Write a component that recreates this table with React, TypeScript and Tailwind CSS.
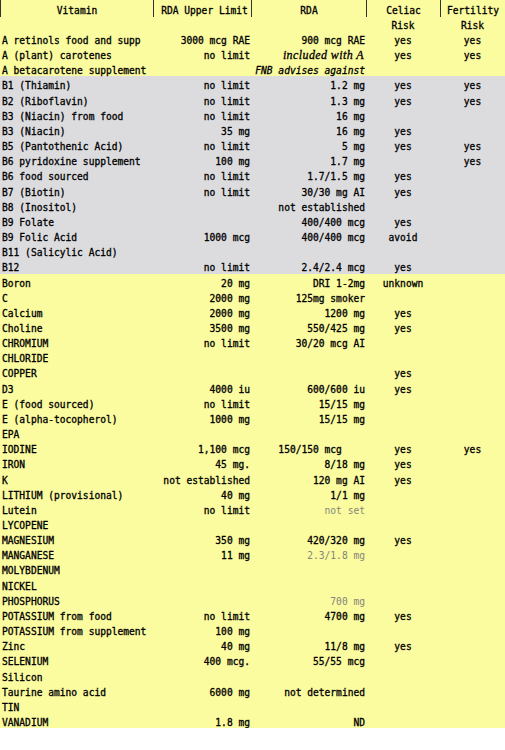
import React from "react";

type Kind = "n" | "gray" | "iserif" | "imono";
type Row = { n: string; u?: string; r?: string; rk?: Kind; c?: string; f?: string; g?: boolean };

const rows: Row[] = [
  { n: "A retinols food and supp", u: "3000 mcg RAE", r: "900 mcg RAE", c: "yes", f: "yes" },
  { n: "A (plant) carotenes", u: "no limit", r: "included with A", rk: "iserif", c: "yes", f: "yes" },
  { n: "A betacarotene supplement", r: "FNB advises against", rk: "imono" },
  { n: "B1 (Thiamin)", u: "no limit", r: "1.2 mg", c: "yes", f: "yes", g: true },
  { n: "B2 (Riboflavin)", u: "no limit", r: "1.3 mg", c: "yes", f: "yes", g: true },
  { n: "B3 (Niacin) from food", u: "no limit", r: "16 mg", g: true },
  { n: "B3 (Niacin)", u: "35 mg", r: "16 mg", c: "yes", g: true },
  { n: "B5 (Pantothenic Acid)", u: "no limit", r: "5 mg", c: "yes", f: "yes", g: true },
  { n: "B6 pyridoxine supplement", u: "100 mg", r: "1.7 mg", f: "yes", g: true },
  { n: "B6 food sourced", u: "no limit", r: "1.7/1.5 mg", c: "yes", g: true },
  { n: "B7 (Biotin)", u: "no limit", r: "30/30 mg AI", c: "yes", g: true },
  { n: "B8 (Inositol)", r: "not established", g: true },
  { n: "B9 Folate", r: "400/400 mcg", c: "yes", g: true },
  { n: "B9 Folic Acid", u: "1000 mcg", r: "400/400 mcg", c: "avoid", g: true },
  { n: "B11 (Salicylic Acid)", g: true },
  { n: "B12", u: "no limit", r: "2.4/2.4 mcg", c: "yes", g: true },
  { n: "Boron", u: "20 mg", r: "DRI 1-2mg", c: "unknown" },
  { n: "C", u: "2000 mg", r: "125mg smoker" },
  { n: "Calcium", u: "2000 mg", r: "1200 mg", c: "yes" },
  { n: "Choline", u: "3500 mg", r: "550/425 mg", c: "yes" },
  { n: "CHROMIUM", u: "no limit", r: "30/20 mcg AI" },
  { n: "CHLORIDE" },
  { n: "COPPER", c: "yes" },
  { n: "D3", u: "4000 iu", r: "600/600 iu", c: "yes" },
  { n: "E (food sourced)", u: "no limit", r: "15/15 mg" },
  { n: "E (alpha-tocopherol)", u: "1000 mg", r: "15/15 mg" },
  { n: "EPA" },
  { n: "IODINE", u: "1,100 mcg", r: "150/150 mcg    ", c: "yes", f: "yes" },
  { n: "IRON", u: "45 mg.", r: "8/18 mg", c: "yes" },
  { n: "K", u: "not established", r: "120 mg AI", c: "yes" },
  { n: "LITHIUM (provisional)", u: "40 mg", r: "1/1 mg" },
  { n: "Lutein", u: "no limit", r: "not set", rk: "gray" },
  { n: "LYCOPENE" },
  { n: "MAGNESIUM", u: "350 mg", r: "420/320 mg", c: "yes" },
  { n: "MANGANESE", u: "11 mg", r: "2.3/1.8 mg", rk: "gray" },
  { n: "MOLYBDENUM" },
  { n: "NICKEL" },
  { n: "PHOSPHORUS", r: "700 mg", rk: "gray" },
  { n: "POTASSIUM from food", u: "no limit", r: "4700 mg", c: "yes" },
  { n: "POTASSIUM from supplement", u: "100 mg" },
  { n: "Zinc", u: "40 mg", r: "11/8 mg", c: "yes" },
  { n: "SELENIUM", u: "400 mcg.", r: "55/55 mcg" },
  { n: "Silicon" },
  { n: "Taurine amino acid", u: "6000 mg", r: "not determined" },
  { n: "TIN" },
  { n: "VANADIUM", u: "1.8 mg", r: "ND" },
];

function RdaCell({ r, k }: { r?: string; k?: Kind }) {
  if (!r) return <div />;
  if (k === "iserif")
    return (
      <div className="text-right pr-[2px] italic text-[12px] tracking-[0.4px]" style={{ fontFamily: '"Liberation Serif", serif' }}>
        {r}
      </div>
    );
  if (k === "imono") return <div className="text-right pr-[1px] italic whitespace-pre">{r}</div>;
  if (k === "gray") return <div className="text-right pr-[1px] text-[#85857a] whitespace-pre [-webkit-text-stroke:0px]">{r}</div>;
  return <div className="text-right pr-[1px] whitespace-pre">{r}</div>;
}

export default function App() {
  return (
    <div
      className="w-[505px] text-[9.6px] text-black [-webkit-text-stroke:0.3px_black]"
      style={{ fontFamily: '"DejaVu Sans Mono", monospace' }}
    >
      <div className="bg-[#fbfb9f] h-[31px]">
        <div className="grid grid-cols-[153px_98px_115px_74px_65px] h-[16px] leading-[13px]">
          <div className="border-l border-[#333] text-center pt-[4px]">Vitamin</div>
          <div className="border-l border-[#333] text-center pt-[4px] pl-[4px]">RDA Upper Limit</div>
          <div className="border-l border-[#333] text-center pt-[4px]">RDA</div>
          <div className="border-l border-[#333] text-center pt-[4px]">Celiac</div>
          <div className="border-l border-[#333] text-center pt-[4px]">Fertility</div>
        </div>
        <div className="grid grid-cols-[153px_98px_115px_74px_65px] leading-[13px] pt-[3px]">
          <div />
          <div />
          <div />
          <div className="text-center">Risk</div>
          <div className="text-center">Risk</div>
        </div>
      </div>
      {rows.map((row, i) => (
        <div
          key={i}
          className={`grid grid-cols-[153px_98px_115px_74px_65px] h-[15.17px] leading-[13px] pt-[3px] ${row.g ? "bg-[#dcdcdf]" : "bg-[#fbfb9f]"}`}
        >
          <div className="pl-[2px] whitespace-pre">{row.n}</div>
          <div className="text-right pr-[1px] whitespace-pre">{row.u ?? ""}</div>
          <RdaCell r={row.r} k={row.rk} />
          <div className="text-center">{row.c ?? ""}</div>
          <div className="text-center">{row.f ?? ""}</div>
        </div>
      ))}
    </div>
  );
}
